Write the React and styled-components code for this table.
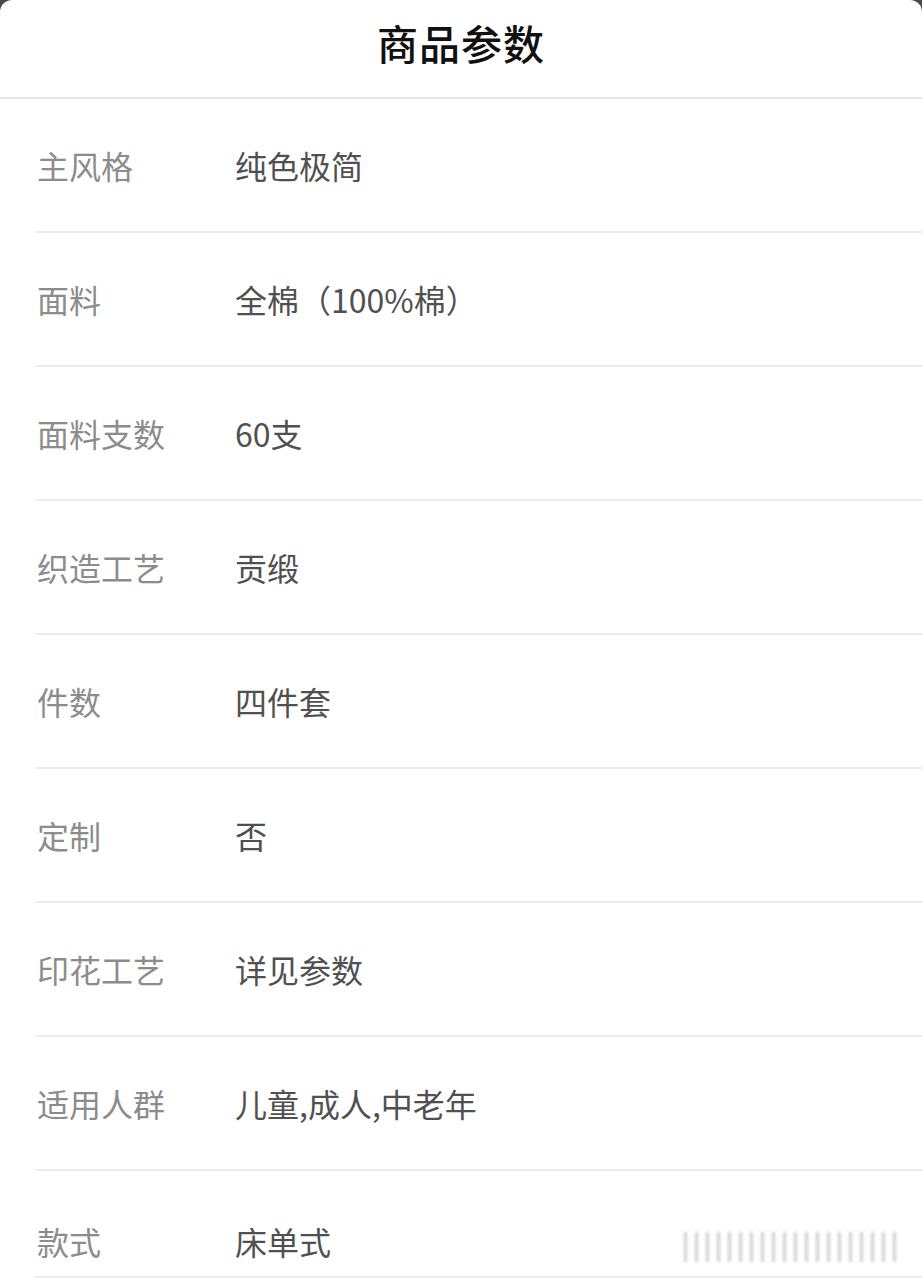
import styled, { createGlobalStyle } from "styled-components";

const GlobalStyle = createGlobalStyle`
  html, body {
    margin: 0;
    padding: 0;
    background: #4a4a4a;
  }
  body {
    font-family: "Noto Sans CJK SC", "Noto Sans", sans-serif;
  }
`;

const params = [
  { label: "主风格", value: "纯色极简" },
  { label: "面料", value: "全棉（100%棉）" },
  { label: "面料支数", value: "60支" },
  { label: "织造工艺", value: "贡缎" },
  { label: "件数", value: "四件套" },
  { label: "定制", value: "否" },
  { label: "印花工艺", value: "详见参数" },
  { label: "适用人群", value: "儿童,成人,中老年" },
  { label: "款式", value: "床单式" },
];

const Sheet = styled.div`
  position: relative;
  width: 922px;
  height: 1282px;
  background: #fff;
  border-radius: 12px 12px 0 0;
  overflow: hidden;
`;

const Header = styled.div`
  height: 97px;
  display: flex;
  align-items: center;
  justify-content: center;
  border-bottom: 2px solid #e6e6e6;
`;

const Title = styled.h1`
  margin: 0 0 14px;
  font-size: 41px;
  font-weight: 500;
  color: #111;
  letter-spacing: 1px;
`;

const List = styled.div`
  padding-left: 35px;
`;

const Row = styled.div`
  height: ${(p) => (p.$last ? "71px" : "132px")};
  display: flex;
  align-items: center;
  border-bottom: 2px solid #ececec;
  padding-top: ${(p) => (p.$last ? "34px" : "0")};
  box-sizing: content-box;
`;

const Label = styled.span`
  width: 198px;
  padding-left: 2px;
  font-size: 32px;
  color: #8c8c8c;
`;

const Value = styled.span`
  font-size: 32px;
  color: #505050;
`;

const Watermark = styled.div`
  position: absolute;
  right: 18px;
  bottom: 20px;
  width: 220px;
  height: 30px;
  opacity: 0.35;
  filter: blur(1.5px);
  background: repeating-linear-gradient(
    90deg,
    #777 0px,
    #777 3px,
    transparent 3px,
    transparent 11px
  );
`;

export default function App() {
  return (
    <>
      <GlobalStyle />
      <Sheet>
        <Header>
          <Title>商品参数</Title>
        </Header>
        <List>
          {params.map((p, i) => (
            <Row key={p.label} $last={i === params.length - 1}>
              <Label>{p.label}</Label>
              <Value>{p.value}</Value>
            </Row>
          ))}
        </List>
        <Watermark />
      </Sheet>
    </>
  );
}
